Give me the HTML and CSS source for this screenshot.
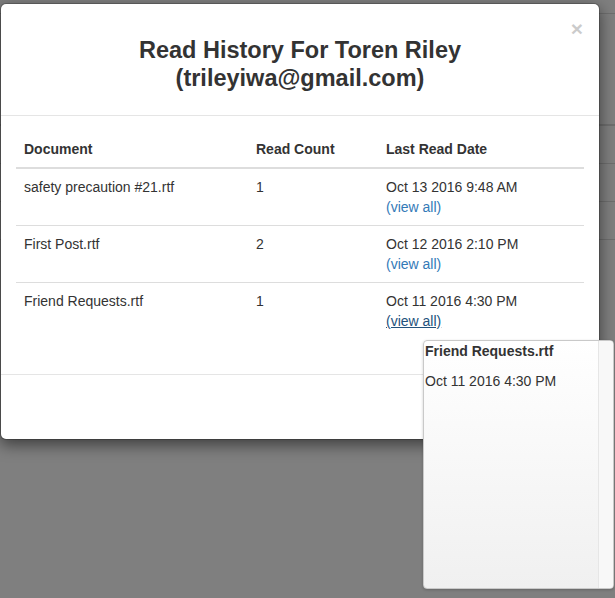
FILE: index.html
```html
<!DOCTYPE html>
<html>
<head>
<meta charset="utf-8">
<link rel="stylesheet" href="styles.css">
</head>
<body>
<div class="under">
  <div class="u-top"></div>
  <div class="u-head"></div>
  <div class="u-row"></div>
  <div class="u-row"></div>
  <div class="u-row"></div>
</div>

<div class="modal">
  <div class="modal-header">
    <span class="close">&times;</span>
    <h4 class="modal-title">Read History For Toren Riley<br>(trileyiwa@gmail.com)</h4>
  </div>
  <div class="modal-body">
    <table class="table">
      <thead>
        <tr>
          <th class="c-doc">Document</th>
          <th class="c-count">Read Count</th>
          <th class="c-date">Last Read Date</th>
        </tr>
      </thead>
      <tbody>
        <tr>
          <td>safety precaution #21.rtf</td>
          <td>1</td>
          <td>Oct 13 2016 9:48 AM<br><a class="link">(view all)</a></td>
        </tr>
        <tr>
          <td>First Post.rtf</td>
          <td>2</td>
          <td>Oct 12 2016 2:10 PM<br><a class="link">(view all)</a></td>
        </tr>
        <tr>
          <td>Friend Requests.rtf</td>
          <td>1</td>
          <td>Oct 11 2016 4:30 PM<br><a class="link hover">(view all)</a></td>
        </tr>
      </tbody>
    </table>
  </div>
  <div class="modal-footer"></div>
</div>

<div class="popover">
  <div class="pop-content">
    <div class="pop-title">Friend Requests.rtf</div>
    <div class="pop-date">Oct 11 2016 4:30 PM</div>
  </div>
  <div class="pop-scroll"></div>
</div>
</body>
</html>
```

FILE: styles.css
```css
* { box-sizing: border-box; }
html, body { margin: 0; padding: 0; }
body {
  width: 615px;
  height: 598px;
  overflow: hidden;
  background: #7f7f7f;
  font-family: "Liberation Sans", Arial, sans-serif;
  font-size: 14px;
  color: #333;
  position: relative;
}

.under { padding-top: 13px; }
.u-top { height: 0; border-bottom: 1px solid #6e6e6e; }
.u-head { height: 112px; border-bottom: 2px solid #6e6e6e; }
.u-row { height: 38px; border-bottom: 1px solid #6e6e6e; }

.modal {
  position: absolute;
  left: 0;
  top: 3px;
  width: 600px;
  background: #fff;
  border: 1px solid rgba(0,0,0,0.2);
  border-radius: 6px;
  box-shadow: 0 5px 15px rgba(0,0,0,0.5);
  background-clip: padding-box;
}

.modal-header {
  position: relative;
  padding: 32px 15px 23px;
  border-bottom: 1px solid #e5e5e5;
}
.modal-title {
  margin: 0;
  text-align: center;
  font-size: 23.5px;
  line-height: 28px;
  font-weight: bold;
  color: #333;
}
.close {
  position: absolute;
  right: 16px;
  top: 14px;
  font-size: 21px;
  font-weight: bold;
  line-height: 1;
  color: #000;
  opacity: 0.2;
}

.modal-body { padding: 15px; }

.table {
  width: 100%;
  border-collapse: collapse;
  border-spacing: 0;
  margin-bottom: 20px;
}
.table th, .table td {
  text-align: left;
  vertical-align: top;
  padding: 8px;
  line-height: 20px;
}
.table th {
  font-weight: bold;
  border-bottom: 2px solid #ddd;
}
.table tbody tr + tr td { border-top: 1px solid #ddd; }
.c-doc { width: 232px; }
.c-count { width: 130px; }

.link { color: #337ab7; text-decoration: none; }
.link.hover { color: #23527c; text-decoration: underline; }

.modal-footer {
  height: 65px;
  border-top: 1px solid #e5e5e5;
}

.popover {
  position: absolute;
  left: 423px;
  top: 340px;
  width: 191px;
  height: 249px;
  border: 1px solid #c9c9c9;
  border-radius: 4px;
  background: linear-gradient(#ffffff, #f0f0f0);
  box-shadow: 0 1px 3px rgba(0,0,0,0.2);
  display: flex;
  overflow: hidden;
}
.pop-content {
  flex: 1;
  padding: 0 1px;
}
.pop-title {
  font-weight: bold;
  font-size: 14px;
  line-height: 20px;
}
.pop-date {
  margin-top: 10px;
  font-size: 14px;
  line-height: 20px;
}
.pop-scroll {
  width: 15px;
  background: #f8f8f8;
  border-left: 1px solid #e6e6e6;
}
```
